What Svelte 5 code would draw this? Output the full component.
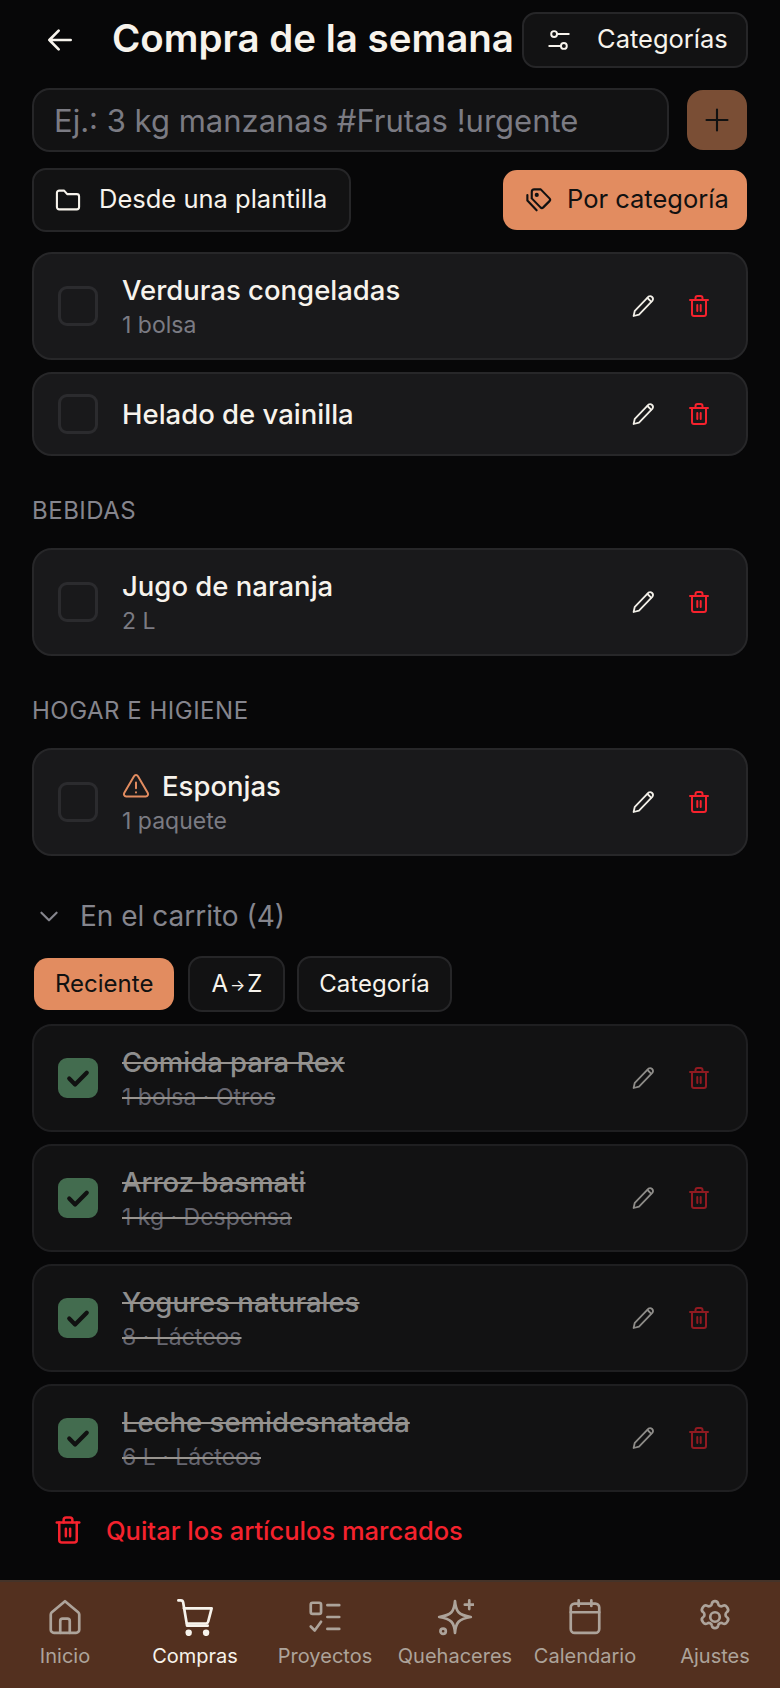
<script lang="ts">
const groups = [
  {
    label: "",
    items: [
      { name: "Verduras congeladas", sub: "1 bolsa" },
      { name: "Helado de vainilla", sub: "" },
    ],
  },
  { label: "BEBIDAS", items: [{ name: "Jugo de naranja", sub: "2 L" }] },
  { label: "HOGAR E HIGIENE", items: [{ name: "Esponjas", sub: "1 paquete", urgent: true }] },
];

const cart = [
  { name: "Comida para Rex", sub: "1 bolsa · Otros" },
  { name: "Arroz basmati", sub: "1 kg · Despensa" },
  { name: "Yogures naturales", sub: "8 · Lácteos" },
  { name: "Leche semidesnatada", sub: "6 L · Lácteos" },
];

const nav = ["Inicio", "Compras", "Proyectos", "Quehaceres", "Calendario", "Ajustes"];
</script>

{#snippet trash(size = 24)}
  <svg width={size} height={size} viewBox="0 0 24 24" fill="none" stroke="currentColor" stroke-width="2" stroke-linecap="round" stroke-linejoin="round">
    <path d="M3 6h18" />
    <path d="M5 6v14a2 2 0 0 0 2 2h10a2 2 0 0 0 2-2V6" />
    <path d="M8.500 6V4a2 2 0 0 1 2-2h3a2 2 0 0 1 2 2v2" />
    <path d="M10.300 11v6M13.700 11v6" />
  </svg>
{/snippet}

{#snippet actions()}
  <div class="actions">
    <svg class="pencil" width="24" height="24" viewBox="0 0 24 24" fill="none" stroke="currentColor" stroke-width="1.800" stroke-linecap="round" stroke-linejoin="round">
      <path d="M17.500 2.600a2.900 2.900 0 0 1 4 4L8 20.600 2.600 22l1.200-5.200z" />
      <path d="M16.500 4l3.600 3.600" />
    </svg>
    <span class="del">{@render trash()}</span>
  </div>
{/snippet}

<div class="app">
  <div class="page">
    <header class="top">
      <svg class="back" width="32" height="32" viewBox="0 0 24 24" fill="none" stroke="currentColor" stroke-width="2" stroke-linecap="round" stroke-linejoin="round">
        <path d="M20 12H4M11 5l-7 7 7 7" />
      </svg>
      <h1>Compra de la semana</h1>
      <button class="btn cats">
        <svg width="26" height="26" viewBox="0 0 24 24" fill="none" stroke="currentColor" stroke-width="1.800" stroke-linecap="round">
          <circle cx="7.500" cy="6.500" r="2.700" />
          <path d="M10.500 6.500H21M3 17.500h10.500" />
          <circle cx="16.500" cy="17.500" r="2.700" />
        </svg>
        <span class="lift">Categorías</span>
      </button>
    </header>

    <div class="add-row">
      <div class="input">Ej.: 3 kg manzanas #Frutas !urgente</div>
      <button class="plus" aria-label="Añadir">
        <svg width="28" height="28" viewBox="0 0 24 24" fill="none" stroke="currentColor" stroke-width="1.800" stroke-linecap="round">
          <path d="M12 3v18M3 12h18" />
        </svg>
      </button>
    </div>

    <div class="tools">
      <button class="btn tool">
        <svg width="28" height="28" viewBox="0 0 24 24" fill="none" stroke="currentColor" stroke-width="1.800" stroke-linejoin="round">
          <path d="M2.500 6a2 2 0 0 1 2-2h4.200l2.600 3h8.200a2 2 0 0 1 2 2v9a2 2 0 0 1-2 2h-15a2 2 0 0 1-2-2z" />
        </svg>
        <span class="lift">Desde una plantilla</span>
      </button>
      <button class="accent tool">
        <svg width="30" height="30" viewBox="0 0 24 24" fill="none" stroke="currentColor" stroke-width="1.700" stroke-linecap="round" stroke-linejoin="round">
          <path d="M9 3.500h5.200l7 7.200a1.600 1.600 0 0 1 0 2.200l-5 5a1.600 1.600 0 0 1-2.200 0L7 10.700V5.500a2 2 0 0 1 2-2z" />
          <path d="M3.500 8v4.400l7.400 7.800" />
          <circle cx="11" cy="7.900" r="0.800" />
        </svg>
        <span class="lift">Por categoría</span>
      </button>
    </div>

    {#each groups as group}
      {#if group.label}
        <h2 class="section">{group.label}</h2>
      {/if}
      <div class="list">
        {#each group.items as item}
          <div class="card" class:single={!item.sub}>
            <span class="check"></span>
            <div class="text">
              <div class="name">
                {#if item.urgent}
                  <svg class="warn" width="28" height="28" viewBox="0 0 24 24" fill="none" stroke="currentColor" stroke-width="1.700" stroke-linecap="round" stroke-linejoin="round">
                    <path d="M10.300 3.600 1.900 18a2 2 0 0 0 1.700 3h16.800a2 2 0 0 0 1.700-3L13.700 3.600a2 2 0 0 0-3.400 0z" />
                    <path d="M12 9v5M12 17.400v.1" />
                  </svg>
                {/if}
                {item.name}
              </div>
              {#if item.sub}
                <div class="sub">{item.sub}</div>
              {/if}
            </div>
            {@render actions()}
          </div>
        {/each}
      </div>
    {/each}

    <div class="cart-head">
      <svg width="26" height="26" viewBox="0 0 24 24" fill="none" stroke="currentColor" stroke-width="2" stroke-linecap="round" stroke-linejoin="round">
        <path d="M5 9l7 7 7-7" />
      </svg>
      En el carrito (4)
    </div>

    <div class="chips">
      <button class="chip on">Reciente</button>
      <button class="chip">A<span class="arrow">→</span>Z</button>
      <button class="chip">Categoría</button>
    </div>

    <div class="list">
      {#each cart as item}
        <div class="card done">
          <span class="check ticked">
            <svg width="28" height="28" viewBox="0 0 24 24" fill="none" stroke="currentColor" stroke-width="3.600" stroke-linecap="round" stroke-linejoin="round">
              <path d="M4.500 12.500l5 5 10-10" />
            </svg>
          </span>
          <div class="text">
            <div class="name">{item.name}</div>
            <div class="sub">{item.sub}</div>
          </div>
          {@render actions()}
        </div>
      {/each}
    </div>

    <button class="clear">
      {@render trash(30)}
      Quitar los artículos marcados
    </button>
  </div>

  <nav class="tabs">
    {#each nav as label, i}
      <div class="tab" class:active={i === 1}>
        <svg width="38" height="38" viewBox="0 0 24 24" fill="none" stroke="currentColor" stroke-width="1.700" stroke-linecap="round" stroke-linejoin="round">
          {#if i === 0}
            <path d="M3 20V10.500a2 2 0 0 1 .7-1.500L12 2l8.300 7a2 2 0 0 1 .7 1.500V20a2 2 0 0 1-2 2H5a2 2 0 0 1-2-2z" />
            <path d="M9 22v-7.500a1.500 1.500 0 0 1 1.500-1.500h3a1.500 1.500 0 0 1 1.500 1.500V22" />
          {:else if i === 1}
            <path d="M1.500 1.500h1.600a1.500 1.500 0 0 1 1.400 1.200l2.500 14.800h13" />
            <path d="M5 6.500h17.500l-2.200 8.500a1.500 1.500 0 0 1-1.400 1.100H7" />
            <circle cx="8" cy="22" r="1.200" fill="currentColor" />
            <circle cx="19" cy="22" r="1.200" fill="currentColor" />
          {:else if i === 2}
            <rect x="3" y="3" width="6.500" height="7" rx="1.200" />
            <path d="M13.500 4.500h7.500M13.500 12h7.500M13.500 19.500h7.500" />
            <path d="M3 18l2.500 2.500L9.500 15" />
          {:else if i === 3}
            <path d="M12 2c.5 6.500 2.200 8.800 10 10-7.800 1.200-9.500 3.500-10 10-.5-6.500-2.200-8.800-10-10 7.800-1.200 9.500-3.500 10-10z" />
            <path d="M21 1.500v5.500M18.200 4.200h5.600" />
            <circle cx="4.500" cy="21" r="1.700" />
          {:else if i === 4}
            <rect x="3" y="3.500" width="18" height="18.500" rx="2.500" />
            <path d="M3 9h18M8 1.500v3.500M16 1.500v3.500" />
          {:else}
            <path d="M12 2c1 0 1.800.7 2 1.700.2 1.300 1.700 2 2.800 1.300.9-.5 2-.3 2.600.5l.6.9c.5.9.3 2-.6 2.600-1 .7-1 2.300 0 3 .9.6 1.100 1.700.6 2.600l-.6.9c-.6.8-1.700 1-2.600.5-1.100-.7-2.600 0-2.800 1.300-.2 1-1 1.700-2 1.700s-1.800-.7-2-1.700c-.2-1.300-1.700-2-2.800-1.300-.9.5-2 .3-2.600-.5l-.6-.9c-.5-.9-.3-2 .6-2.600 1-.7 1-2.300 0-3-.9-.6-1.100-1.700-.6-2.600l.6-.9c.6-.8 1.700-1 2.600-.5 1.100.7 2.600 0 2.800-1.300.2-1 1-1.700 2-1.700z" />
            <circle cx="12" cy="12" r="3" />
          {/if}
        </svg>
        <span>{label}</span>
      </div>
    {/each}
  </nav>
</div>

<style>
  :global(body) {
    background: #070708;
    font-family: "Inter", "Liberation Sans", sans-serif;
    color: #f7f3ec;
  }
  button {
    font: inherit;
    color: inherit;
    background: none;
    border: none;
    padding: 0;
  }
  .app {
    height: 1688px;
    overflow: hidden;
  }
  .page {
    height: 1580px;
    box-sizing: border-box;
    padding: 12px 32px 0 32px;
    overflow: hidden;
  }
  .top {
    display: flex;
    align-items: center;
    height: 56px;
  }
  .back {
    margin-left: 12px;
    flex: none;
  }
  h1 {
    margin: 0 0 4px 36px;
    flex: 1;
    font-size: 38.500px;
    font-weight: 600;
    white-space: nowrap;
    line-height: 1;
  }
  .lift {
    margin-bottom: 3px;
  }
  .btn {
    display: flex;
    align-items: center;
    background: #121213;
    border: 2px solid #262628;
    border-radius: 14px;
    box-sizing: border-box;
  }
  .cats {
    flex: none;
    width: 226px;
    height: 56px;
    padding-left: 22px;
    gap: 25px;
    font-size: 25.500px;
  }
  .add-row {
    display: flex;
    align-items: center;
    justify-content: space-between;
    margin-top: 20px;
  }
  .input {
    width: 637px;
    height: 64px;
    box-sizing: border-box;
    display: flex;
    align-items: center;
    padding: 0 0 0 20px;
    background: #121213;
    border: 2px solid #262628;
    border-radius: 18px;
    color: #7b7b83;
    font-size: 31px;
  }
  .plus {
    width: 60px;
    height: 60px;
    margin-right: 1px;
    display: flex;
    align-items: center;
    justify-content: center;
    background: #7a4e35;
    color: #111;
    border-radius: 16px;
  }
  .tools {
    display: flex;
    align-items: center;
    justify-content: space-between;
    margin-top: 16px;
  }
  .tool {
    font-size: 25.500px;
  }
  .btn.tool {
    width: 319px;
    height: 64px;
    padding-left: 20px;
    gap: 17px;
  }
  .accent {
    display: flex;
    align-items: center;
    gap: 14px;
    width: 244px;
    height: 60px;
    margin-right: 1px;
    padding-left: 20px;
    box-sizing: border-box;
    background: #e28c60;
    color: #111;
    border-radius: 14px;
  }
  .list {
    display: flex;
    flex-direction: column;
    gap: 12px;
  }
  .tools + .list {
    margin-top: 20px;
  }
  .section {
    margin: 40px 0 22px;
    font-size: 24px;
    line-height: 30px;
    font-weight: 400;
    color: #85858d;
    letter-spacing: 0.5px;
  }
  .card {
    display: flex;
    align-items: center;
    height: 108px;
    box-sizing: border-box;
    padding: 0 35px 0 24px;
    background: #19191b;
    border: 2px solid #272729;
    border-radius: 20px;
  }
  .card.single {
    height: 84px;
  }
  .check {
    flex: none;
    width: 40px;
    height: 40px;
    box-sizing: border-box;
    border: 3px solid #2b2b2e;
    border-radius: 9px;
    display: flex;
    align-items: center;
    justify-content: center;
    margin-right: 24px;
  }
  .check.ticked {
    background: #436c4f;
    border-color: #436c4f;
    color: #111;
  }
  .text {
    flex: 1;
    min-width: 0;
  }
  .name {
    display: flex;
    align-items: center;
    gap: 12px;
    font-size: 27.500px;
    font-weight: 500;
    line-height: 36px;
  }
  .warn {
    color: #e28c60;
  }
  .sub {
    font-size: 23px;
    line-height: 32px;
    color: #7b7b83;
    margin-top: 1px;
  }
  .actions {
    display: flex;
    align-items: center;
    gap: 32px;
    color: #f2efe8;
  }
  .del {
    display: flex;
    color: #f5222d;
  }
  .done {
    background: #121213;
    border-color: #1f1f21;
  }
  .done .name,
  .done .sub {
    display: block;
    text-decoration: line-through;
    text-decoration-color: #98948f;
    text-decoration-thickness: 2px;
  }
  .done .name {
    color: #8e8e8e;
  }
  .done .sub {
    color: #666670;
  }
  .done .actions {
    opacity: 0.55;
  }
  .cart-head {
    display: flex;
    align-items: center;
    gap: 18px;
    margin: 40px 0 20px 2px;
    height: 40px;
    padding-left: 2px;
    font-size: 28px;
    color: #85858d;
  }
  .chips {
    display: flex;
    align-items: center;
    gap: 12px;
    margin-bottom: 12px;
    padding-left: 2px;
  }
  .chip {
    height: 56px;
    box-sizing: border-box;
    padding: 0 21px 2px;
    background: #121213;
    border: 2px solid #262628;
    border-radius: 14px;
    font-size: 24px;
    display: flex;
    align-items: center;
  }
  .chip.on {
    height: 52px;
    background: #e28c60;
    border: none;
    color: #111;
  }
  .chip:nth-child(2) {
    margin-left: 2px;
  }
  .chip:nth-child(3) {
    padding: 0 20px 2px;
  }
  .arrow {
    font-size: 16px;
    margin: 4px 2px 0;
  }
  .clear {
    display: flex;
    align-items: center;
    gap: 23px;
    margin: 22px 0 0 21px;
    height: 32px;
    font-size: 25.500px;
    font-weight: 500;
    color: #f5222d;
  }
  .tabs {
    height: 108px;
    box-sizing: border-box;
    display: grid;
    grid-template-columns: repeat(6, 1fr);
    padding: 16px 0 0 0;
    background: #53301f;
    border-top: 2px solid #453329;
  }
  .tab {
    display: flex;
    flex-direction: column;
    align-items: center;
    gap: 8px;
    color: #ada39a;
    font-size: 20px;
    white-space: nowrap;
  }
  .tab.active {
    color: #f7f3ec;
  }
</style>
